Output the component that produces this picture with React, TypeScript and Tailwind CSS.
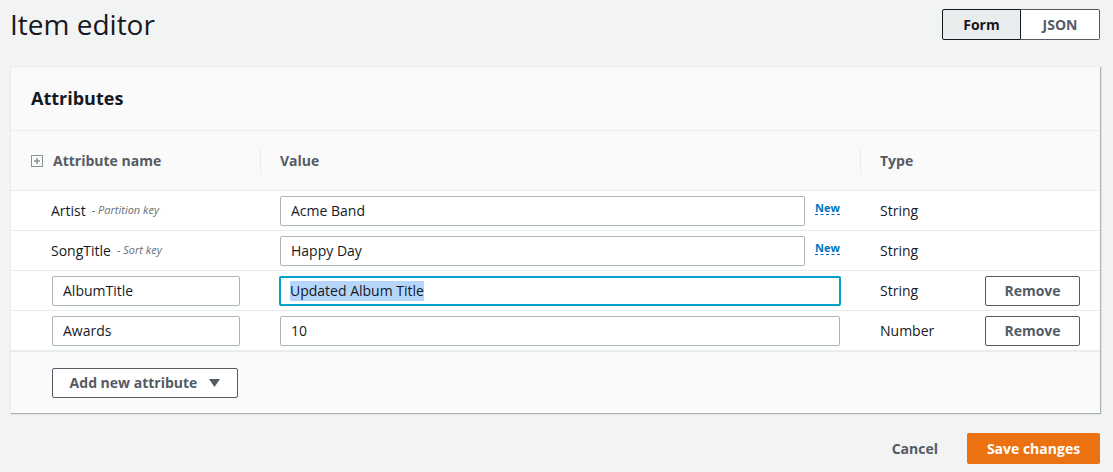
import React from "react";

const font = { fontFamily: '"Open Sans", "Noto Sans", Arial, sans-serif' };

function NameCell({ name, hint }: { name: string; hint: string }) {
  return (
    <div className="flex items-center pl-[40px] text-[14px] text-[#16191f]">
      <span>{name}</span>
      <span className="ml-[6px] text-[11px] italic text-[#687078]">- {hint}</span>
    </div>
  );
}

function Input({ value, w, focused, selected }: { value: string; w: string; focused?: boolean; selected?: boolean }) {
  return (
    <div
      className={`${w} h-[30px] flex items-center bg-white text-[14px] text-[#16191f] ${
        focused ? "border-2 border-[#00a1c9] rounded-[2px] pl-[9px]" : "border border-[#aab7b8] rounded-[2px] pl-[10px]"
      }`}
    >
      <span className={selected ? "bg-[#b5d5fb] leading-[20px]" : ""}>{value}</span>
    </div>
  );
}

function RemoveBtn() {
  return (
    <div className="w-[95px] h-[30px] border border-[#545b64] rounded-[2px] flex items-center justify-center text-[14px] font-bold text-[#545b64] bg-white">
      Remove
    </div>
  );
}

function NewTag() {
  return (
    <span className="ml-[10px] text-[11px] font-bold text-[#0073bb] border-b border-dashed border-[#0073bb] leading-[13px] mb-[6px]">
      New
    </span>
  );
}

const grid = "grid grid-cols-[250px_600px_105px_1fr]";

export default function App() {
  return (
    <div className="w-[1113px] h-[472px] bg-[#f2f3f3] overflow-hidden" style={font}>
      <div className="h-[66px] flex items-start justify-between pl-[10px] pr-[13px]">
        <h1 className="text-[28px] leading-[48px] text-[#16191f] mt-0">Item editor</h1>
        <div className="flex mt-[9px] h-[31px] text-[14px] font-bold">
          <div className="w-[79px] flex items-center justify-center bg-[#eaeded] border border-[#16191f] rounded-l-[2px] text-[#16191f]">
            Form
          </div>
          <div className="w-[79px] flex items-center justify-center bg-white border border-l-0 border-[#545b64] rounded-r-[2px] text-[#545b64]">
            JSON
          </div>
        </div>
      </div>

      <div className="mx-[10px] w-[1090px] bg-[#fafafa] border-t border-l border-[#eaeded] shadow-[1px_1px_1px_0_rgba(0,28,36,0.3)]">
        <div className="h-[63px] flex items-center pl-[20px] text-[18px] font-bold text-[#16191f]">Attributes</div>

        <div className={`${grid} h-[60px] border-t border-[#eaeded] text-[14px] font-bold text-[#545b64]`}>
          <div className="flex items-center pl-[20px] border-r border-[#eaeded] my-[16px]">
            <svg width="12" height="12" viewBox="0 0 12 12" className="mr-[10px]">
              <rect x="0.5" y="0.5" width="11" height="11" fill="none" stroke="#879596" />
              <path d="M6 3 V9 M3 6 H9" stroke="#879596" strokeWidth="1.5" />
            </svg>
            Attribute name
          </div>
          <div className="flex items-center pl-[19px] border-r border-[#eaeded] my-[16px]">Value</div>
          <div className="flex items-center pl-[19px]">Type</div>
          <div />
        </div>

        <div className="bg-white">
          <div className={`${grid} h-[40px] border-t border-[#eaeded]`}>
            <NameCell name="Artist" hint="Partition key" />
            <div className="flex items-center pl-[19px]">
              <Input value="Acme Band" w="w-[525px]" />
              <NewTag />
            </div>
            <div className="flex items-center pl-[19px] text-[14px] text-[#16191f]">String</div>
            <div />
          </div>
          <div className={`${grid} h-[40px] border-t border-[#eaeded]`}>
            <NameCell name="SongTitle" hint="Sort key" />
            <div className="flex items-center pl-[19px]">
              <Input value="Happy Day" w="w-[525px]" />
              <NewTag />
            </div>
            <div className="flex items-center pl-[19px] text-[14px] text-[#16191f]">String</div>
            <div />
          </div>
          <div className={`${grid} h-[40px] border-t border-[#eaeded]`}>
            <div className="flex items-center pl-[41px]">
              <Input value="AlbumTitle" w="w-[188px]" />
            </div>
            <div className="flex items-center pl-[18px]">
              <Input value="Updated Album Title" w="w-[562px]" focused selected />
            </div>
            <div className="flex items-center pl-[19px] text-[14px] text-[#16191f]">String</div>
            <div className="flex items-center pl-[19px]">
              <RemoveBtn />
            </div>
          </div>
          <div className={`${grid} h-[40px] border-t border-[#eaeded]`}>
            <div className="flex items-center pl-[41px]">
              <Input value="Awards" w="w-[188px]" />
            </div>
            <div className="flex items-center pl-[19px]">
              <Input value="10" w="w-[560px]" />
            </div>
            <div className="flex items-center pl-[19px] text-[14px] text-[#16191f]">Number</div>
            <div className="flex items-center pl-[19px]">
              <RemoveBtn />
            </div>
          </div>
        </div>

        <div className="h-[63px] border-t-2 border-[#eaeded] flex items-center pl-[41px]">
          <div className="w-[186px] h-[30px] border border-[#545b64] rounded-[2px] bg-white flex items-center justify-center gap-[12px] text-[14px] font-bold text-[#545b64]">
            Add new attribute
            <svg width="11" height="8" viewBox="0 0 11 8">
              <path d="M0 0 H11 L5.5 8 Z" fill="#545b64" />
            </svg>
          </div>
        </div>
      </div>

      <div className="flex justify-end items-center pr-[13px] mt-[20px] gap-[29px]">
        <span className="text-[14px] font-bold text-[#545b64]">Cancel</span>
        <div className="w-[133px] h-[31px] bg-[#ec7211] rounded-[2px] flex items-center justify-center text-[14px] font-bold text-white">
          Save changes
        </div>
      </div>
    </div>
  );
}
